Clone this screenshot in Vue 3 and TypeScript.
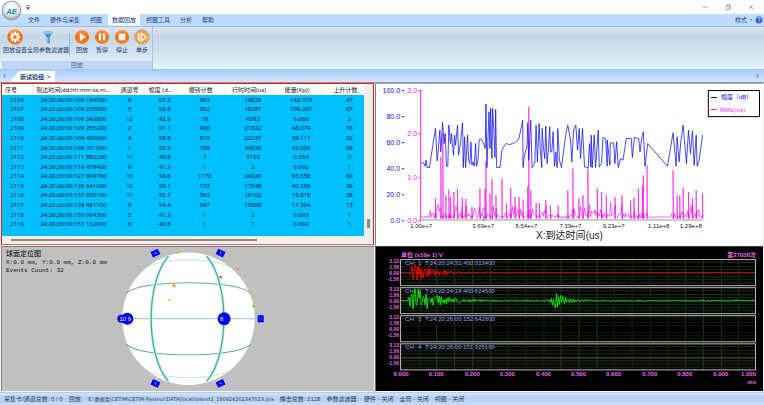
<script setup lang="ts">
import { ref } from 'vue'

type Point = [number, number]

const menus = ['文件', '硬件与采集', '视图', '数据回放', '视图工具', '分析', '帮助']
const activeMenu = ref('数据回放')

const headers = ['序号', '到达时间(dd:hh:mm:ss.m...', '通道号', '幅度 (d...', '振铃计数', '行时时间(us)', '能量(KpJ)', '上升计数']
const rows: string[][] = [
  ['2106', '24:20:26:00:109 184500', '6', '67.2', '893', '19828', '142.373', '47'],
  ['2107', '24:20:26:00:109 235800', '5', '66.8', '852', '18281', '106.267', '67'],
  ['2108', '24:20:26:00:109 242800', '12', '42.9', '18', '4383', '0.668', '2'],
  ['2109', '24:20:26:00:109 255200', '2', '61.1', '968', '21822', '48.074', '76'],
  ['2110', '24:20:26:00:109 495600', '4', '58.8', '819', '22237', '39.111', '92'],
  ['2111', '24:20:26:00:109 701600', '1', '55.5', '788', '24839', '42.006', '69'],
  ['2112', '24:20:26:00:111 882200', '11', '40.8', '7', '3152', '0.354', '3'],
  ['2113', '24:20:26:00:116 479400', '9', '41.3', '1', '2', '0.002', '1'],
  ['2114', '24:20:26:00:127 804700', '10', '58.6', '1178', '26020', '93.558', '60'],
  ['2115', '24:20:26:00:135 641000', '12', '59.1', '733', '17548', '40.559', '36'],
  ['2116', '24:20:26:00:137 035100', '11', '55.7', '563', '16102', '19.818', '38'],
  ['2117', '24:20:26:00:138 481700', '9', '54.4', '547', '15809', '17.304', '13'],
  ['2118', '24:20:26:00:150 064300', '5', '41.3', '1', '2', '0.003', '1'],
  ['2119', '24:20:26:00:151 132000', '6', '40.8', '1', '1', '0.002', '1'],
]

const makeRandom = (seed: number) => () => {
  seed = (seed * 1103515245 + 12345) % 2147483648
  return seed / 2147483648
}
const toPath = (pts: Point[]) => pts.map((p) => p[0].toFixed(1) + ',' + p[1].toFixed(1)).join(' ')

// Trend chart: series are kept on a grid three times finer than the drawing.
const amplitude =
  '138,250 145,247 150,258 153,240 156,262 163,262 170,215 181,145 186,242 190,200 194,150 197,215 202,127 207,190 210,160 214,258 218,258 221,135 226,190 229,160 235,225 238,165 241,195 247,135 250,225 255,195 262,128 264,262 268,170 271,262 277,165 280,240 284,250 287,185 290,255 294,245 297,258 301,190 304,258 308,240 312,178 318,178 325,190 330,205 332,72 335,262 341,95 344,205 346,85 350,235 352,85 356,160 359,232 361,88 364,262 374,262 380,208 392,190 402,193 415,190 430,178 436,150 442,120 443,262 447,225 455,200 457,128 460,240 466,120 470,262 478,250 482,135 486,245 491,130 495,215 499,262 500,145 504,200 508,235 511,138 515,250 519,205 523,140 525,215 529,215 533,155 537,258 541,215 545,262 547,145 552,240 558,262 566,200 573,150 577,135 585,180 589,245 594,150 601,135 606,210 611,145 615,235 621,145 627,260 638,262 642,190 646,260 647,165 650,262 656,165 660,262 668,150 671,260 678,250 682,172 690,175 695,258 695,180 703,255 704,188 714,188 718,250 723,185 728,262 735,235 742,240 752,175 767,175 770,232 776,172 789,175 793,215 798,175 803,155 808,258 816,190 875,258 884,205 892,158 901,258 904,170 910,245 915,185 922,135 928,205 932,250 938,150 944,220 950,152 955,255 961,165 964,258 970,240 980,165'

const spikes: Point[] = [
  [181, 355], [197, 230], [203, 160], [212, 345], [221, 328], [226, 350], [236, 335], [247, 325], [261, 352], [272, 355], [290, 380],
  [314, 325], [329, 325], [332, 245], [344, 340], [350, 297], [362, 345], [380, 295], [393, 370], [406, 323], [419, 350], [431, 350],
  [443, 360], [457, 320], [460, 80], [466, 330], [482, 368], [492, 368], [511, 360], [525, 375], [548, 375], [577, 330], [592, 265],
  [610, 355], [622, 345], [637, 265], [665, 325], [678, 335], [692, 345], [718, 350], [739, 345], [765, 360], [775, 352], [788, 325],
  [800, 315], [803, 285], [814, 255], [892, 270], [904, 345], [912, 345], [922, 322], [938, 335], [950, 355], [961, 330], [980, 340],
]
const rmsLine = (() => {
  const rnd = makeRandom(17)
  const pts: Point[] = []
  let next = 0
  for (let x = 138; x <= 981; x += 3) {
    const calm = x < 165 || (x > 816 && x < 885) || (x > 366 && x < 385) || (x > 548 && x < 574)
    if (x > 820 && x < 885) {
      if (x % 9 === 0) pts.push([x, 410])
    } else {
      const peak = !calm && rnd() > 0.72 ? rnd() * 34 : 0
      pts.push([x, 414 - rnd() * (calm ? 8 : 16) - peak])
    }
    while (next < spikes.length && spikes[next][0] <= x) {
      pts.push([spikes[next][0], 414], spikes[next], [spikes[next][0] + 1, 415])
      next++
    }
  }
  return toPath(pts)
})()

const leftTicks = ['100.0', '80.0', '60.0', '40.0', '20.0', '0.0'].map((label, i) => ({ label, y: 90 + i * 26 }))
const rmsTicks = ['3.0', '2.0', '1.0', '0.0'].map((label, i) => ({ label, y: Math.round(90 + i * 43.3) }))
const xTicks = [
  { label: '1.00e+7', x: 421 }, { label: '3.69e+7', x: 483 }, { label: '5.54e+7', x: 526 }, { label: '7.39e+7', x: 570 },
  { label: '9.23e+7', x: 613 }, { label: '1.11e+8', x: 658 }, { label: '1.29e+8', x: 690 },
]

// Waveform traces
const burst = (x: number, start: number, peak: number, decay: number) => {
  if (x < start) return 0
  return x < start + 6 ? (peak * (x - start)) / 6 : peak * Math.exp(-(x - start - 6) / decay)
}
const trace = (mid: number, seed: number, envelope: (x: number) => number) => {
  const rnd = makeRandom(seed)
  const pts: Point[] = []
  let sign = 1
  for (let x = 401; x <= 754; x += 1) {
    if (rnd() > 0.3) sign = -sign
    pts.push([x, mid + sign * envelope(x) * (0.15 + 0.85 * rnd())])
  }
  return toPath(pts)
}
const channels = [
  { no: 1, y: 260, time: 'T:24:20:24:31:400:313400', cls: 'red', line: trace(273.5, 5, (x) => 0.4 + burst(x, 408, 9, 22)) },
  { no: 2, y: 288, time: 'T:24:20:24:18:400:624500', cls: 'green', line: trace(301.5, 11, (x) => 0.9 + burst(x, 408, 15, 20) + burst(x, 549, 8, 9)) },
  { no: 3, y: 316, time: 'T:24:20:26:00:152:642600', cls: 'none', line: '' },
  { no: 4, y: 344, time: 'T:24:20:26:00:151:325100', cls: 'amber', line: '401,358.5 754,358.5' },
]
const gridX = Array.from({ length: 19 }, (_, i) => Math.round(401 + (i + 1) * 17.7))
const timeTicks = Array.from({ length: 11 }, (_, i) => ({ label: (i / 10).toFixed(3), x: Math.round(401 + i * 35.4) }))

const sensors = [
  { x: 155, y: 254, r: -25 }, { x: 220, y: 254, r: 25 }, { x: 260, y: 319, r: 0 }, { x: 155, y: 384, r: 25 }, { x: 220, y: 384, r: -25 },
]
const events = [
  { x: 177, y: 253, c: '#d8c800' }, { x: 173, y: 285, c: '#ff8a10' }, { x: 174, y: 286, c: '#ff8a10' }, { x: 169, y: 300, c: '#d8c800' },
  { x: 237, y: 269, c: '#ff8a10' }, { x: 220, y: 277, c: '#f01800' }, { x: 253, y: 296, c: '#d8c800' }, { x: 253, y: 306, c: '#60c000' },
]
</script>

<template>
  <div class="app">
    <header class="title-bar">
      <button class="orb" aria-label="AE">
        <svg viewBox="0 0 20 20">
          <defs>
            <radialGradient id="orb" cx=".5" cy=".35" r=".65">
              <stop offset="0" stop-color="#fff" /><stop offset=".65" stop-color="#dfe2e8" /><stop offset="1" stop-color="#8e98a8" />
            </radialGradient>
          </defs>
          <circle cx="10" cy="10" r="9" fill="url(#orb)" stroke="#9aa2ae" />
          <text x="10" y="13" text-anchor="middle" class="orb-text">AE</text>
        </svg>
      </button>
      <button class="quick" aria-label="快速访问">
        <svg viewBox="0 0 4 5"><path d="M0 .5h4M.5 2.5h3L2 4.500z" stroke="#555" stroke-width=".7" fill="#555" /></svg>
      </button>
      <div class="window-buttons">
        <button aria-label="最小化"><svg viewBox="0 0 6 6"><path d="M.5 3h5" /></svg></button>
        <button aria-label="还原"><svg viewBox="0 0 6 6"><path d="M1 2h3.500v3.500H1zM2 2V.7h3.300V4.500H4.500" /></svg></button>
        <button aria-label="关闭"><svg viewBox="0 0 6 6"><path d="M1 1l4 4M5 1L1 5" /></svg></button>
      </div>
    </header>

    <nav class="menu">
      <button v-for="m in menus" :key="m" :class="{ active: m === activeMenu }" @click="activeMenu = m">{{ m }}</button>
      <div class="menu-right">
        <button class="style-button">样式</button>
        <svg class="caret" viewBox="0 0 4 4"><path d="M.5 1h3L2 3z" fill="#6a86b8" /></svg>
        <svg class="help" viewBox="0 0 8 8">
          <circle cx="4" cy="4" r="3.500" fill="#2558c4" stroke="#8fb0e8" stroke-width=".7" />
          <path d="M2.800 3.200c0-1.700 2.500-1.600 2.400-.1C5.100 4 4 4 4 5M4 5.600v.6" stroke="#fff" stroke-width=".8" fill="none" />
        </svg>
      </div>
    </nav>

    <section class="ribbon">
      <div class="group">
        <div class="tools">
          <button class="tool w4">
            <svg viewBox="0 0 16 16">
              <defs>
                <linearGradient id="orange" x2="0" y2="1"><stop offset="0" stop-color="#ff9a3c" /><stop offset=".5" stop-color="#f46a0a" /><stop offset="1" stop-color="#f8801c" /></linearGradient>
              </defs>
              <circle cx="8" cy="8" r="7.700" fill="url(#orange)" />
              <path d="M8 2.800v10.400M2.800 8h10.400M4.300 4.300l7.400 7.400M11.700 4.300l-7.400 7.400" stroke="#fff" stroke-width="2" />
              <circle cx="8" cy="8" r="3.700" fill="#fff" /><circle cx="8" cy="8" r="1.800" fill="#f46a0a" />
            </svg>
            <span>回放设置</span>
          </button>
          <button class="tool w7">
            <svg viewBox="0 0 16 16">
              <path d="M3.500 3.500L6.700 8v5.500l3 1.500V8l3-4.500z" fill="#3f86cc" />
              <ellipse cx="8" cy="3.500" rx="4.700" ry="1.800" fill="#8cc4ee" /><path d="M7.300 8v5.500l1 .5V8z" fill="#b8dcf6" />
            </svg>
            <span>全局参数滤波器</span>
          </button>
          <i class="divider"></i>
          <button class="tool w2">
            <svg viewBox="0 0 16 16"><circle cx="8" cy="8" r="7" fill="url(#orange)" /><path d="M5.800 3.800l6.200 4.200-6.200 4.200z" fill="#fff" /></svg>
            <span>回放</span>
          </button>
          <button class="tool w2">
            <svg viewBox="0 0 16 16"><circle cx="8" cy="8" r="7" fill="url(#orange)" /><path d="M4.800 4.500h2.300v7H4.800zM8.900 4.500h2.300v7H8.900z" fill="#fff" /></svg>
            <span>暂停</span>
          </button>
          <button class="tool w2">
            <svg viewBox="0 0 16 16"><circle cx="8" cy="8" r="7" fill="url(#orange)" /><path d="M4.700 4.700h6.600v6.600H4.700z" fill="#fff" /></svg>
            <span>停止</span>
          </button>
          <button class="tool w2">
            <svg viewBox="0 0 16 16">
              <circle cx="8" cy="8" r="7.200" fill="#f7a040" stroke="#a8a49c" stroke-width=".8" />
              <path d="M3.800 4.300h1.700v7.400H3.800z" fill="#fff" /><path d="M7.300 4.300l5.200 3.700-5.200 3.700z" fill="#f7a040" stroke="#fff" stroke-width="1.300" />
            </svg>
            <span>单步</span>
          </button>
        </div>
        <div class="group-title">回放</div>
      </div>
    </section>

    <div class="doc-bar">
      <button class="arrow" aria-label="向左"><svg viewBox="0 0 4 6"><path d="M3 1L1 3l2 2z" fill="none" stroke="#6f8fc4" stroke-width=".7" /></svg></button>
      <div class="doc-tab"><span>新试验组</span><button aria-label="关闭标签"><svg viewBox="0 0 6 6"><path d="M1.500 1.500l3 3M4.500 1.500l-3 3" stroke="#5c7eb4" stroke-width=".8" /></svg></button></div>
      <button class="arrow last" aria-label="向右"><svg viewBox="0 0 4 6"><path d="M1 1l2 2-2 2z" fill="none" stroke="#6f8fc4" stroke-width=".7" /></svg></button>
    </div>

    <main class="panes">
      <section class="pane table-pane">
        <div class="table-row">
          <div class="table-wrap">
            <table>
              <colgroup><col v-for="n in 8" :key="n" :class="'c' + n" /></colgroup>
              <thead><tr><th v-for="h in headers" :key="h">{{ h }}</th></tr></thead>
              <tbody>
                <tr v-for="r in rows" :key="r[0]"><td v-for="(c, i) in r" :key="i">{{ c }}</td></tr>
              </tbody>
            </table>
          </div>
          <div class="v-scroll"><i></i></div>
        </div>
        <div class="h-scroll"><i></i></div>
      </section>

      <section class="pane chart-pane">
        <svg viewBox="376 84 386 161">
          <g class="blue num">
            <template v-for="t in leftTicks" :key="t.label">
              <text :x="400" :y="t.y + 3" text-anchor="end">{{ t.label }}</text>
              <path :d="`M402 ${t.y + 0.5}h2`" stroke="#1010f0" />
            </template>
          </g>
          <g class="pink num">
            <template v-for="t in rmsTicks" :key="t.label">
              <text :x="417" :y="t.y + 3" text-anchor="end">{{ t.label }}</text>
              <path :d="`M418 ${t.y + 0.5}h3`" stroke="#ff30ff" />
            </template>
          </g>
          <path d="M420 219.500h282" stroke="#999" />
          <path d="M483.500 216v4" stroke="#555" />
          <g transform="translate(375 80) scale(.33333)" fill="none">
            <polyline :points="rmsLine" stroke="#ff00f0" stroke-width="1.800" />
            <polyline :points="amplitude" stroke="#0808f0" stroke-width="2.200" />
          </g>
          <path d="M420.500 90v130" stroke="#ff30f0" />
          <text v-for="t in xTicks" :key="t.label" :x="t.x" y="228" text-anchor="middle" class="x-label">{{ t.label }}</text>
          <text x="569" y="239" text-anchor="middle" class="x-title">X:到达时间(us)</text>
          <rect x="707.500" y="90.500" width="51" height="26" fill="#fff" stroke="#000" />
          <path d="M710 97.500h6" stroke="#0000e0" /><path d="M710 109.500h6" stroke="#ff00ff" />
          <text x="720" y="99" class="blue legend">幅度（dB）</text>
          <text x="719" y="112" class="pink legend">RMS(mv)</text>
        </svg>
      </section>

      <section class="pane sphere-pane">
        <svg viewBox="2 248 371 143">
          <circle cx="188" cy="319.500" r="66" fill="#fff" />
          <g fill="none" stroke="#86c8bc">
            <path d="M122 319.500h132" />
            <path d="M126 294C140 280 236 280 250 294M126 345C140 359 236 359 250 345" stroke="#5cb0a0" />
            <path d="M145 269C160 258 216 258 231 269M145 370C160 381 216 381 231 370" stroke="#b4dcd6" stroke-width=".8" />
            <path d="M168 257C145 283 145 356 168 382M206 257C229 283 229 356 206 382" stroke="#c8f0ea" stroke-width="3" />
            <path d="M168 257C145 283 145 356 168 382M206 257C229 283 229 356 206 382" stroke="#4aa898" stroke-width="1.200" />
          </g>
          <rect v-for="e in events" :key="e.x + '-' + e.y" :x="e.x - 1" :y="e.y" width="2" height="2" :fill="e.c" />
          <g v-for="s in sensors" :key="s.x + '-' + s.y" :transform="`rotate(${s.r} ${s.x} ${s.y})`">
            <rect :x="s.x - (s.r ? 4 : 3)" :y="s.y - 3" :width="s.r ? 8 : 6" :height="s.r ? 6 : 7" fill="#0000fa" />
            <path :d="`M${s.x - 1} ${s.y - 1}l2 2`" stroke="#b8b8ff" stroke-width=".8" />
          </g>
          <circle cx="121" cy="319.500" r="4" fill="#0000fa" /><circle cx="127" cy="319.500" r="6" fill="#0000fa" />
          <circle cx="223.500" cy="319.500" r="6.500" fill="#0000fa" />
          <text x="125" y="322" text-anchor="middle" class="node">10 9</text>
          <text x="221" y="322" text-anchor="middle" class="node">8</text>
          <text x="6" y="257" class="sphere-title">球面定位图</text>
          <text x="6" y="265" class="mono">X:0.0 mm, Y:0.0 mm, Z:0.0 mm</text>
          <text x="6" y="273" class="mono">Events Count: 32</text>
        </svg>
      </section>

      <section class="pane wave-pane">
        <svg viewBox="376 248 386 143">
          <text x="401" y="258" class="wave-label">单位 (x10e 1) V</text>
          <text x="755" y="258" text-anchor="end" class="wave-label">第27036次</text>
          <g v-for="c in channels" :key="c.no">
            <path v-for="x in gridX" :key="x" :d="`M${x}.5 ${c.y + 1}v25`" :stroke="x % 2 ? '#16280e' : '#223c18'" />
            <path v-for="dy in [3, 7, 10, 17, 20, 23]" :key="dy" :d="`M401 ${c.y + dy}.5h353`" :stroke="c.no === 3 ? '#101c0a' : '#1c3014'" />
            <path v-if="c.no < 3" :d="`M401 ${c.y + 13}.5h353`" stroke="#1a4a14" />
          </g>
          <g v-for="c in channels" :key="c.no">
            <rect x="400.500" :y="c.y + 0.5" width="354" height="26" fill="none" stroke="#bcbcbc" />
            <text x="405" :y="c.y + 6" class="ch">CH:</text>
            <text x="418" :y="c.y + 6" class="ch">{{ c.no }}</text>
            <text x="425" :y="c.y + 6" class="ch">{{ c.time }}</text>
            <g class="scale-label" text-anchor="end">
              <text x="399" :y="c.y + 4">3.13</text>
              <text x="399" :y="c.y + 10">1.56</text>
              <text x="399" :y="c.y + 16">0.00</text>
              <text x="399" :y="c.y + 22">-1.56</text>
            </g>
          </g>
          <polyline v-for="c in channels" :key="c.no" :points="c.line" :class="['trace', c.cls]" />
          <text v-for="(t, i) in timeTicks" :key="t.label" :x="i === 10 ? 755 : t.x" y="377" :text-anchor="i === 10 ? 'end' : 'middle'" class="wave-label">{{ t.label }}</text>
          <text x="755" y="385" text-anchor="end" class="wave-label">ms</text>
        </svg>
      </section>
    </main>

    <footer class="status">
      <span>采集卡/通道总数: 0 / 0</span>
      <span>回放:</span>
      <span class="path">E:\数据类\CETIM\CETIM-Pasteur\DATA\locationtest1_190924202347023.pra</span>
      <span>撞击总数: 2128</span>
      <span>参数滤波器:</span>
      <span>硬件 - 关闭</span>
      <span>全局 - 关闭</span>
      <span>视图 - 关闭</span>
    </footer>
  </div>
</template>

<style>
body {
  background: #eef2f8;
}
</style>

<style scoped>
.app {
  display: flex;
  flex-direction: column;
  height: 100vh;
  overflow: hidden;
  font: 6px/8px 'Noto Sans', 'Noto Sans CJK SC', sans-serif;
  color: #1c3c78;
}
button {
  border: 0;
  padding: 0;
  margin: 0;
  background: none;
  font: inherit;
  color: inherit;
  white-space: nowrap;
}
svg {
  display: block;
}
.title-bar {
  position: relative;
  display: flex;
  align-items: center;
  height: 14px;
  background: #fff;
}
.orb {
  position: absolute;
  z-index: 2;
  left: 1px;
  top: 0;
}
.orb svg {
  width: 21px;
  height: 21px;
}
.orb-text {
  font: italic bold 7px 'Liberation Sans', sans-serif;
  fill: #0a8c94;
}
.quick {
  margin-left: 26px;
}
.quick svg {
  width: 4px;
  height: 5px;
}
.window-buttons {
  display: flex;
  gap: 17px;
  margin-left: auto;
  padding-right: 10px;
}
.window-buttons svg {
  width: 6px;
  height: 6px;
  fill: none;
  stroke: #8a8a8a;
  stroke-width: 0.7;
}
.menu {
  display: flex;
  height: 12px;
  padding-left: 24px;
  gap: 2px;
  background: #bfdbff;
}
.menu button {
  padding: 0 4px;
}
.menu button.active {
  background: linear-gradient(#fff, #eaf3fc);
  border-radius: 2px 2px 0 0;
}
.menu-right {
  display: flex;
  align-items: center;
  gap: 2px;
  margin-left: auto;
  padding-right: 1px;
}
.menu .style-button {
  padding: 0;
}
.caret {
  width: 4px;
  height: 4px;
}
.help {
  width: 8px;
  height: 8px;
}
.ribbon {
  height: 44px;
  box-sizing: border-box;
  border-top: 1px solid #9dbde8;
  border-bottom: 1px solid #a5c8ee;
  padding-left: 2px;
  background: linear-gradient(#dbe6f2, #c6d7e9 22%, #cfdfee 55%, #e6f6fe);
}
.group {
  width: max-content;
  height: 42px;
  display: flex;
  flex-direction: column;
  box-sizing: border-box;
  border-right: 1px solid #a8c4e4;
}
.tools {
  display: flex;
  flex: 1;
  padding: 2px 0 0 1px;
}
.tool {
  display: flex;
  flex-direction: column;
  align-items: center;
  justify-content: flex-start;
}
.tool svg {
  width: 16px;
  height: 16px;
}
.tool span {
  margin-top: 1px;
}
.w4 {
  width: 24px;
}
.w7 {
  width: 42px;
}
.w2 {
  width: 20px;
}
.divider {
  width: 1px;
  height: 22px;
  margin-right: 2px;
  margin-top: 4px;
  background: #98b8dc;
}
.group-title {
  height: 8px;
  text-align: center;
  color: #3e6aaa;
  background: #c0d6f0;
}
.doc-bar {
  display: flex;
  align-items: flex-end;
  height: 13px;
  box-sizing: border-box;
  border-bottom: 1px solid #8a94a4;
  background: linear-gradient(#a9ccff, #d4e6fd);
}
.arrow {
  display: flex;
  align-items: center;
  height: 12px;
  padding: 0 2px;
}
.arrow svg {
  width: 4px;
  height: 6px;
}
.arrow.last {
  margin-left: auto;
  padding-right: 4px;
}
.doc-tab {
  display: flex;
  align-items: center;
  height: 11px;
  margin-left: 2px;
  padding: 0 3px 0 10px;
  gap: 2px;
  font-weight: bold;
  background: #fff;
  clip-path: polygon(0 100%, 9px 0, 100% 0, 100% 100%);
}
.doc-tab svg {
  width: 6px;
  height: 6px;
}
.panes {
  flex: 1;
  min-height: 0;
  display: grid;
  grid-template-columns: 373fr 388fr;
  grid-template-rows: 163fr 145fr;
  gap: 1px;
  padding: 0 1px 1px;
  background: #f4f4f4;
}
.pane {
  min-width: 0;
  min-height: 0;
  box-sizing: border-box;
  overflow: hidden;
}
.pane > svg {
  width: 100%;
  height: 100%;
}
.table-pane {
  display: flex;
  flex-direction: column;
  border: 1px solid #f01818;
  border-bottom-color: #f86060;
  background: #f0f0f0;
}
.table-row {
  display: flex;
  flex: 1;
  min-height: 0;
}
.table-wrap {
  flex: 1;
  min-width: 0;
  overflow: hidden;
  background: #00bfff;
}
table {
  width: calc(100% + 6px);
  height: 145px;
  table-layout: fixed;
  border-collapse: collapse;
  color: #06202c;
}
th,
td {
  padding: 0;
  text-align: center;
  white-space: nowrap;
  overflow: hidden;
  line-height: 8px;
}
th {
  height: 11px;
  background: #fff;
  color: #222;
  font-weight: normal;
  border-right: 1px solid #eee;
}
th:first-child {
  text-align: left;
  padding-left: 3px;
}
td:nth-child(n + 4) {
  padding-left: 8px;
}
.c1,
.c3 {
  width: 8.2%;
}
.c2 {
  width: 22.4%;
}
.c4 {
  width: 8.7%;
}
.c5,
.c6,
.c7,
.c8 {
  width: 13.1%;
}
.v-scroll {
  display: flex;
  align-items: flex-end;
  justify-content: center;
  width: 9px;
}
.v-scroll i {
  width: 3px;
  height: 9px;
  margin-bottom: 8px;
  background: #888;
}
.h-scroll {
  display: flex;
  align-items: center;
  height: 8px;
  padding-left: 9px;
}
.h-scroll i {
  width: 68%;
  height: 2px;
  background: #888;
}
.chart-pane {
  border-left: 1px solid #808080;
  border-top: 1px solid #a8a8a8;
  background: #fff;
}
.num,
.legend {
  font: 7px 'Liberation Sans', 'Noto Sans CJK SC', sans-serif;
}
.legend {
  font-size: 6px;
}
.blue {
  fill: #1010f0;
}
.pink {
  fill: #ff20ff;
}
.x-label {
  font: 6px 'Liberation Sans', sans-serif;
  fill: #222;
}
.x-title {
  font: 10px 'Liberation Sans', 'Noto Sans CJK SC', sans-serif;
  fill: #222;
}
.sphere-pane {
  border-left: 1px solid #808080;
  border-top: 1px solid #808080;
  background: #c0c0c0;
}
.sphere-title {
  font: 7px 'Noto Sans CJK SC', sans-serif;
  fill: #000;
}
.mono {
  font: 6px 'Liberation Mono', monospace;
  fill: #111;
  white-space: pre;
}
.node {
  font: 6px 'Liberation Sans', sans-serif;
  fill: #fff;
}
.wave-pane {
  border-left: 1px solid #606060;
  border-top: 1px solid #404040;
  background: #000;
}
.wave-label,
.scale-label {
  font: bold 6px 'Liberation Sans', 'Noto Sans CJK SC', sans-serif;
  fill: #e868e8;
}
.scale-label {
  font-size: 5px;
}
.ch {
  font: 6px 'Liberation Sans', sans-serif;
  fill: #9c9cff;
}
.trace {
  fill: none;
  stroke-width: 0.9;
}
.red {
  stroke: #f80000;
}
.green {
  stroke: #00f000;
}
.amber {
  stroke: #866414;
}
.none {
  stroke: none;
}
.status {
  display: flex;
  align-items: center;
  gap: 6px;
  height: 12px;
  padding-left: 4px;
  white-space: nowrap;
  border-top: 1px solid #b8cce8;
  background: linear-gradient(#d4e4f8, #b2cef4 40%, #c8dcf8);
  color: #2c3c58;
  font-family: 'Liberation Sans', 'Noto Sans CJK SC', sans-serif;
}
.path {
  font: 5px/8px 'DejaVu Sans', 'Noto Sans CJK SC', sans-serif;
}
</style>
